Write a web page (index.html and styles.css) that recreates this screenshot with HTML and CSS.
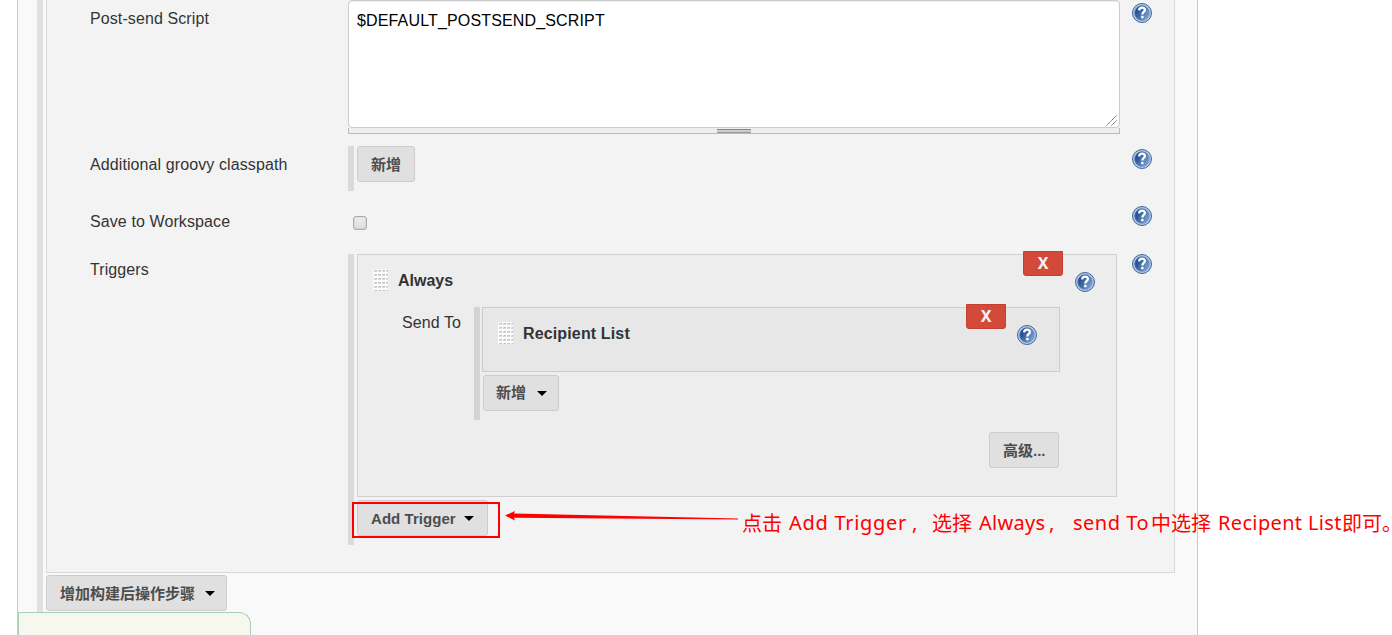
FILE: index.html
```html
<!DOCTYPE html>
<html lang="zh">
<head>
<meta charset="utf-8">
<title>Jenkins</title>
<link rel="stylesheet" href="styles.css">
</head>
<body>
<svg class="defs" width="0" height="0">
  <defs>
    <linearGradient id="orb" x1="0" y1="0.2" x2="1" y2="0.8">
      <stop offset="0" stop-color="#204a87"/><stop offset="0.3" stop-color="#2f5b9b"/><stop offset="1" stop-color="#86a9d6"/>
    </linearGradient>
    <symbol id="help" viewBox="0 0 20 20">
      <circle cx="10" cy="10" r="9.5" fill="#b4c8e2" stroke="#3c679f" stroke-width="1"/>
      <circle cx="10" cy="10" r="7.4" fill="url(#orb)" stroke="#6389bd" stroke-width=".5"/>
      <path d="M7.1 7.3C7.3 5.2 8.5 4.6 10 4.6c1.9 0 2.9 1 2.9 2.4 0 2-2.6 2-2.6 4.6" fill="none" stroke="#fff" stroke-width="2.3"/>
      <rect x="9.1" y="12.8" width="2.4" height="2.4" rx=".5" fill="#fff"/>
    </symbol>
    <pattern id="dots" width="4" height="4" patternUnits="userSpaceOnUse">
      <rect width="4" height="4" fill="#fafafa"/>
      <rect x="1" y="1" width="3" height="2" fill="#d9d9d9"/>
      <rect x="2" y="1" width="2" height="1" fill="#c2c2c2"/>
    </pattern>
    <symbol id="grip" viewBox="0 0 15 22"><rect width="15" height="22" fill="url(#dots)"/></symbol>
  </defs>
</svg>
<main class="page">
  <div class="steps">
    <section class="publisher">
      <div class="row script-row">
        <label class="label">Post-send Script</label>
        <div class="editor">
          <div class="textarea">$DEFAULT_POSTSEND_SCRIPT
            <svg class="corner" width="11" height="11"><path d="M.5 10.5l10-10M5.5 10.5l5-5" stroke="#555" stroke-dasharray="1.4 .5"/></svg>
          </div>
          <div class="resize"><span class="resize-grip"></span></div>
        </div>
        <svg class="help help-low"><use href="#help"/></svg>
      </div>
      <div class="row path-row">
        <label class="label">Additional groovy classpath</label>
        <div class="repeat path-list"><button class="button add"><span class="cjk">新增</span></button></div>
        <svg class="help help-low"><use href="#help"/></svg>
      </div>
      <div class="row save-row">
        <label class="label">Save to Workspace</label>
        <div><span class="checkbox"></span></div>
        <svg class="help help-low"><use href="#help"/></svg>
      </div>
      <div class="row">
        <label class="label">Triggers</label>
        <div class="repeat trigger-list">
          <div class="card trigger">
            <div class="card-head">
              <svg class="grip"><use href="#grip"/></svg><b class="title">Always</b>
              <button class="delete">X</button><svg class="help"><use href="#help"/></svg>
            </div>
            <div class="send">
              <label class="send-label">Send To</label>
              <div class="repeat recipients">
                <div class="card recipient">
                  <div class="card-head">
                    <svg class="grip"><use href="#grip"/></svg><b class="title recipient-title">Recipient List</b>
                    <button class="delete">X</button><svg class="help"><use href="#help"/></svg>
                  </div>
                </div>
                <button class="button add-recipient"><span class="cjk raised">新增</span><i class="caret"></i></button>
              </div>
            </div>
            <div class="advanced"><button class="button advanced-button"><span class="cjk">高级...</span></button></div>
          </div>
          <button class="button add-trigger">Add Trigger<i class="caret"></i></button>
        </div>
        <svg class="help"><use href="#help"/></svg>
      </div>
    </section>
    <button class="button add-step"><span class="cjk">增加构建后操作步骤</span><i class="caret"></i></button>
  </div>
  <div class="save-bar"></div>
</main>
<div class="marker"></div>
<svg class="arrow" width="236" height="14" viewBox="0 0 236 14">
  <path d="M0 6.5L10 2L9 4.6L233 9.6V10.5L9 8.8L10 11.5z" fill="#f00"/>
</svg>
<div class="note"><span class="zh n1">点击</span><span class="n2">Add Trigger</span><span class="n3">,</span><span class="zh n4">选择</span><span class="n5">Always</span><span class="n6">,</span><span class="n7">send To</span><span class="zh n8">中选择</span><span class="n9">Recipent List</span><span class="zh n10">即可。</span></div>
</body>
</html>
```
FILE: styles.css
```css
* { box-sizing: border-box; }
body { margin: 0; width: 1392px; height: 635px; overflow: hidden; background: #fff; color: #333; font: 16px/20px "Liberation Sans", "Noto Sans CJK SC", sans-serif; }
.defs { position: absolute; }
.page { width: 1181px; height: 635px; margin-left: 17px; border: solid #ccc; border-width: 0 1px; background: #f9f9f9; }
.steps { height: 612px; margin: 0 22px 0 19px; border-left: 6px solid #e0e0e0; padding-left: 3px; }
.publisher { height: 573px; border: 1px solid #d9d9d9; border-top: 0; background: #f3f3f3; padding-left: 43px; }
.row { display: grid; grid-template-columns: 258px 772px 20px; align-items: start; }
.row > .help { margin-left: 12px; }
.script-row { height: 146px; }
.path-row { height: 57px; }
.save-row { height: 51px; }
.label { padding-top: 9px; letter-spacing: .1px; }
.row:last-child .label { padding-top: 6px; }
.help { width: 20px; height: 20px; display: block; flex: none; }
.row .help-low { margin-top: 3px; }
.textarea { position: relative; height: 128px; padding: 10px 8px; border: 1px solid #ccc; border-radius: 4px; background: #fff; color: #000; letter-spacing: .15px; box-shadow: inset 0 1px 1px #0001; }
.corner { position: absolute; right: 2px; bottom: 1px; }
.resize { height: 6px; border: 1px solid #bbb; border-top: 0; background: #eee; display: flex; justify-content: center; padding-top: 1px; }
.resize-grip { width: 34px; height: 4px; background: linear-gradient(#888 1px, #ccc 1px 3px, #999 3px); }
.repeat { border-left: 6px solid #dadada; display: flex; flex-direction: column; align-items: flex-start; }
.path-list { height: 45px; padding-left: 3px; }
.button { display: flex; align-items: center; justify-content: flex-start; height: 36px; padding: 0 0 0 13px; border: 1px solid #ccc; border-radius: 3px; background: #e0e0e0; color: #4d4d4d; font: bold 15px "Liberation Sans", "Noto Sans CJK SC", sans-serif; white-space: nowrap; }
.cjk { padding-bottom: 2px; font-weight: 600; }
.raised { padding-bottom: 3px; }
.add { width: 58px; }
.caret { margin-left: auto; margin-right: 11px; border: 5px solid transparent; border-top-color: #000; border-bottom: 0; }
.checkbox { display: block; width: 14px; height: 14px; margin: 13px 0 0 5px; border: 1px solid #aaa; border-radius: 3px; background: linear-gradient(#eee, #dcdcdc); box-shadow: inset 0 0 0 1px #ccc8; }
.trigger-list { height: 291px; padding-left: 3px; gap: 3px; }
.card { border: 1px solid #d0d0d0; }
.trigger { width: 760px; height: 243px; background: #ededed; }
.card-head { display: flex; align-items: flex-start; height: 52px; padding: 0 21px 0 15px; }
.grip { width: 15px; height: 22px; margin-top: 14px; flex: none; }
.title { margin: 16px auto 0 10px; }
.recipient-title { letter-spacing: .14px; }
.delete { width: 40px; height: 25px; margin-top: -4px; padding: 0; border: 1px solid #c23f31; border-radius: 0 0 3px 3px; background: #d34a3a; color: #f4f4f4; font: bold 16px/23px "Noto Sans", sans-serif; }
.card-head .help { margin: 17px 0 0 12px; }
.send { display: flex; height: 113px; padding-left: 44px; }
.send-label { width: 72px; padding-top: 6px; letter-spacing: .1px; }
.recipients { width: 586px; padding-left: 2px; border-color: #d3d3d3; gap: 3px; }
.recipient { width: 578px; height: 65px; background: #e7e7e7; border-color: #ccc; }
.recipient .help { margin-left: 11px; }
.recipient .card-head { padding-right: 22px; }
.add-recipient { width: 76px; margin-left: 1px; padding-left: 12px; }
.advanced { display: flex; justify-content: flex-end; padding: 12px 57px 0 0; }
.advanced-button { width: 70px; }
.add-trigger { width: 131px; letter-spacing: .05px; }
.add-trigger .caret { margin-right: 13px; }
.add-step { width: 181px; margin-top: 2px; }
.save-bar { height: 23px; width: 233px; border: solid #a8cdb8; border-width: 1px 1px 0 1px; border-radius: 0 12px 0 0; background: #f6f8ef; }
.marker { position: absolute; left: 352px; top: 502px; width: 148px; height: 36px; border: 2px solid #f00; }
.arrow { position: absolute; left: 505px; top: 509px; }
.note { position: absolute; left: 742px; top: 508px; display: flex; color: #f00; font: 20px/30px "Noto Sans", sans-serif; white-space: nowrap; }
.note span { flex: none; }
.zh { font-family: "Noto Sans CJK SC", sans-serif; }
.n1 { width: 47px; }
.n2 { width: 123px; letter-spacing: .7px; }
.n3 { width: 20px; }
.n4 { width: 47px; }
.n5 { width: 70px; letter-spacing: .3px; }
.n6 { width: 24px; }
.n7 { width: 78px; letter-spacing: .5px; }
.n8 { width: 67px; }
.n9 { width: 124px; letter-spacing: .35px; }
.n10 { width: 50px; font-feature-settings: "halt"; }
```
